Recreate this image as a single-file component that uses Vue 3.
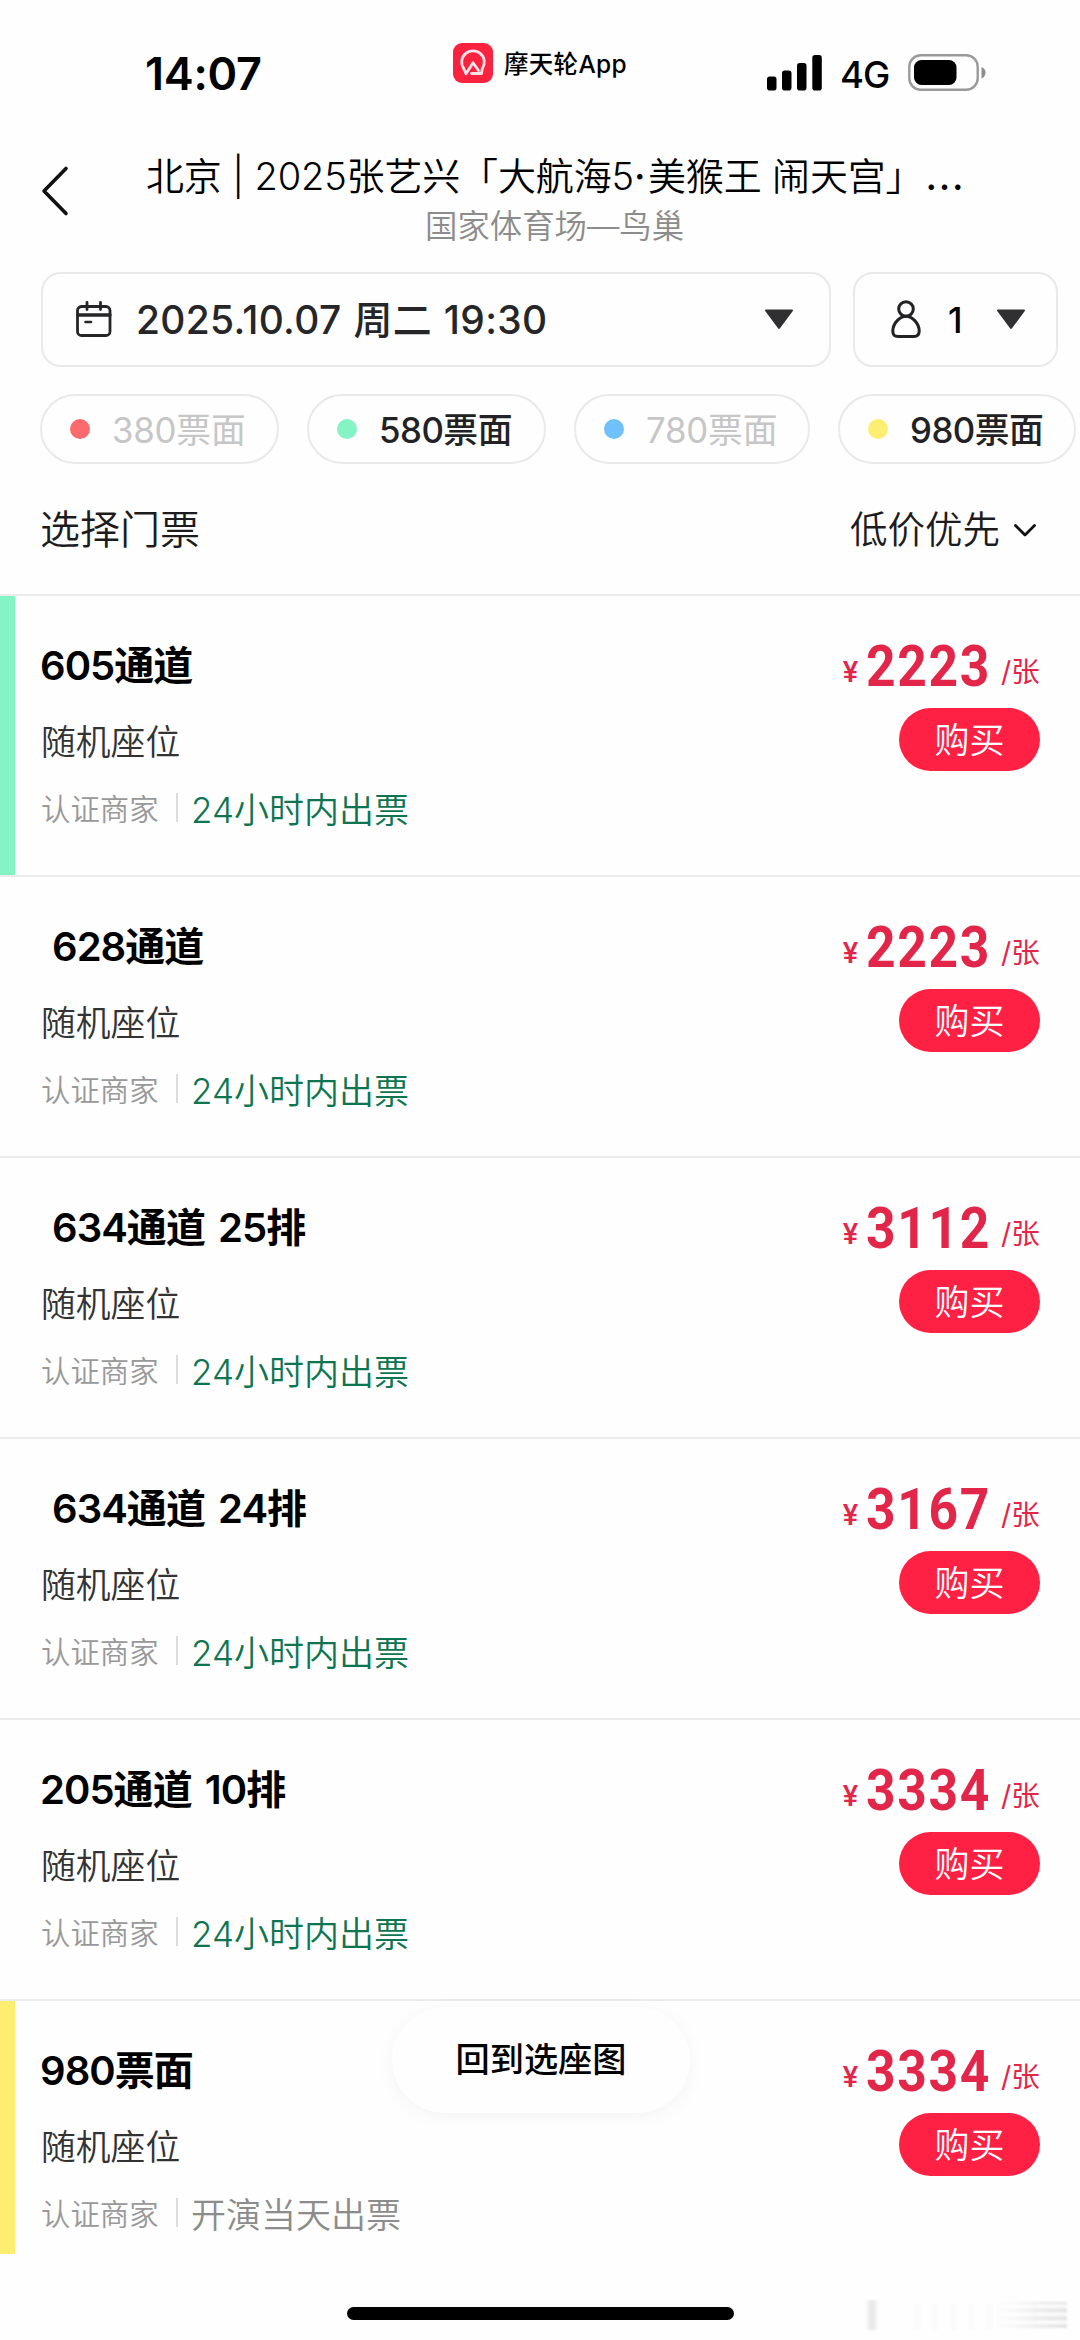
<script setup>
const faces = [
  { name: '380票面', color: '#fb6a6c', off: true, width: 239 },
  { name: '580票面', color: '#84f4c4', off: false, width: 239 },
  { name: '780票面', color: '#6fc0fb', off: true, width: 236 },
  { name: '980票面', color: '#fdee72', off: false, width: 238 },
]

const tickets = [
  { name: '605通道', price: 2223, issue: '24小时内出票', bar: '#84f4c4' },
  { name: '628通道', price: 2223, issue: '24小时内出票', indent: true },
  { name: '634通道 25排', price: 3112, issue: '24小时内出票', indent: true },
  { name: '634通道 24排', price: 3167, issue: '24小时内出票', indent: true },
  { name: '205通道 10排', price: 3334, issue: '24小时内出票' },
  { name: '980票面', price: 3334, issue: '开演当天出票', bar: '#fdee72', sameDay: true },
]
</script>

<template>
  <div class="screen">
    <div class="status">
      <div class="clock">14:07</div>
      <div class="source">
        <svg width="40" height="40" viewBox="0 0 40 40">
          <rect width="40" height="40" rx="9" fill="#f9223f" />
          <g fill="none" stroke="#ffe3e8" stroke-width="2.8" stroke-linejoin="round" stroke-linecap="round">
            <path d="M10.700 25.500A11.300 11.300 0 1 1 29.300 25.500L28.500 30.500H18.500" />
            <path d="M10.700 25.500L13 30.800L20 19.800L25.500 27.500" />
          </g>
        </svg>
        <span>摩天轮App</span>
      </div>
      <div class="signals">
        <svg class="bars" width="56" height="36" viewBox="0 0 56 36">
          <rect x="0" y="21.500" width="9.500" height="14" rx="2.800" />
          <rect x="15" y="15.500" width="9.500" height="20" rx="2.800" />
          <rect x="30" y="8" width="9.500" height="27.500" rx="2.800" />
          <rect x="45.300" y="0" width="9.500" height="35.500" rx="2.800" />
        </svg>
        <span class="net">4G</span>
        <svg width="78" height="38" viewBox="0 0 78 38">
          <rect x="1.300" y="1.300" width="68.400" height="34.400" rx="11.500" fill="none" stroke="#9a9a9a" stroke-width="2.400" />
          <rect x="6" y="6" width="42.500" height="25" rx="7.500" />
          <path d="M73.500 13Q77.500 14.500 77.500 18.500T73.500 24.500Z" fill="#8c8c8c" />
        </svg>
      </div>
    </div>

    <header class="head">
      <svg class="back" width="30" height="52" viewBox="0 0 30 52">
        <path d="M25 3.500L3 26L25 48.500" fill="none" stroke="#111" stroke-width="3.600" stroke-linecap="round" stroke-linejoin="round" />
      </svg>
      <div class="titles">
        <h1>北京 | 2025张艺兴「大航海5<span class="dot">·</span>美猴王 闹天宫」<span class="more">...</span></h1>
        <p>国家体育场—鸟巢</p>
      </div>
    </header>

    <div class="pickers">
      <div class="box date">
        <svg width="36" height="37" viewBox="0 0 36 37" fill="none" stroke="#262629" stroke-width="2.800" stroke-linecap="round">
          <rect x="1.500" y="5.500" width="32.500" height="29" rx="4" />
          <path d="M2 14H34" stroke-width="3.400" />
          <path d="M11 1.500V8.500M24.500 1.500V8.500" />
          <path d="M9.500 21H15" stroke-width="2.600" />
        </svg>
        <span class="when">2025.10.07 周二 19:30</span>
        <svg width="30" height="21" viewBox="0 0 30 21"><path d="M2 1.500H28L15 19Z" fill="#303033" stroke="#303033" stroke-width="2" stroke-linejoin="round" /></svg>
      </div>
      <div class="box count">
        <svg width="30" height="39" viewBox="0 0 30 39" fill="none" stroke="#222225" stroke-width="3">
          <circle cx="15" cy="9" r="7.300" />
          <path d="M15 16.300C21 16.300 28 23 28.200 31C28.200 35 26.500 36.500 23 36.500H7C3.500 36.500 1.800 35 1.800 31C2 23 9 16.300 15 16.300Z" />
        </svg>
        <span>1</span>
        <svg width="30" height="21" viewBox="0 0 30 21"><path d="M2 1.500H28L15 19Z" fill="#303033" stroke="#303033" stroke-width="2" stroke-linejoin="round" /></svg>
      </div>
    </div>

    <div class="faces">
      <div v-for="f in faces" :key="f.name" class="face" :class="{ off: f.off }" :style="{ width: f.width + 'px' }">
        <i :style="{ background: f.color }"></i>
        <span>{{ f.name }}</span>
      </div>
    </div>

    <div class="bar">
      <span class="choose">选择门票</span>
      <span class="sort">低价优先</span>
      <svg width="24" height="15" viewBox="0 0 24 15"><path d="M2.500 2.500L12 12L21.500 2.500" fill="none" stroke="#111" stroke-width="2.800" stroke-linecap="round" stroke-linejoin="round" /></svg>
    </div>

    <main class="list">
      <article v-for="(t, n) in tickets" :key="n" class="ticket">
        <div v-if="t.bar" class="stripe" :style="{ background: t.bar }"></div>
        <div class="info">
          <h2 :class="{ indent: t.indent }">{{ t.name }}</h2>
          <p class="seat">随机座位</p>
          <div class="meta">
            <span class="seller">认证商家</span>
            <i></i>
            <span class="issue" :class="{ late: t.sameDay }">{{ t.issue }}</span>
          </div>
        </div>
        <div class="buy">
          <div class="price">
            <span class="yen">¥</span><span class="num">{{ t.price }}</span><span class="per">/张</span>
          </div>
          <button>购买</button>
        </div>
      </article>
      <button class="seatmap">回到选座图</button>
    </main>

    <footer class="foot">
      <div class="home"></div>
      <div class="smudge"></div>
    </footer>
  </div>
</template>

<style>
body {
  margin: 0;
  background: #fefefe;
}
</style>

<style scoped>
.screen {
  width: 1080px;
  height: 2340px;
  overflow: hidden;
  position: relative;
  background: #fefefe;
  color: #000;
  font-family: Inter, "Noto Sans CJK SC", sans-serif;
  display: flex;
  flex-direction: column;
}
h1, h2, p { margin: 0; font-weight: 400; }
span, h1, h2, p, button { white-space: pre; }
svg { flex: none; display: block; }
button { border: 0; padding: 0; font-family: inherit; }

.status { height: 146px; display: flex; align-items: flex-start; flex: none; }
.clock {
  margin: 46px 0 0 145px;
  width: 308px;
  font-size: 45px;
  line-height: 56px;
  font-weight: 600;
  letter-spacing: -0.3px;
}
.source {
  margin-top: 43px;
  width: 314px;
  display: flex;
  gap: 11px;
  font-size: 24.5px;
  line-height: 42px;
  font-weight: 500;
  letter-spacing: 0.3px;
}
.signals { margin-top: 54px; display: flex; }
.bars { margin-top: 1px; }
.net {
  width: 68px;
  margin-left: 17px;
  font-size: 36.5px;
  line-height: 42px;
  font-weight: 500;
  letter-spacing: -1px;
}

.head { height: 126px; display: flex; flex: none; }
.back { margin: 19px 0 0 41px; }
.titles { margin-left: 75px; width: 816px; }
h1 { font-size: 38px; line-height: 56px; font-weight: 350; margin-top: 2px; letter-spacing: -0.15px; }
.dot { font-weight: 500; letter-spacing: 2.500px; }
.more { letter-spacing: 1.800px; margin-left: 2px; font-weight: 500; }
.titles p {
  font-size: 32.4px;
  line-height: 44px;
  margin: 1px 0 0 279px;
  color: #8c8c8c;
  font-weight: 350;
}

.pickers { display: flex; gap: 22px; padding-left: 41px; flex: none; }
.box {
  box-sizing: border-box;
  height: 95px;
  border: 2px solid #e9e9e9;
  border-radius: 20px;
  display: flex;
  align-items: center;
  color: #262629;
}
.date { width: 790px; padding-left: 33px; }
.when {
  width: 628px;
  margin-left: 24px;
  font-size: 38.900px;
  font-weight: 500;
  line-height: 50px;
  letter-spacing: 0.35px;
  word-spacing: 1.200px;
}
.count { width: 205px; padding-left: 36px; }
.count span { width: 48px; margin-left: 27px; font-size: 35px; font-weight: 550; color: #000; }

.faces { display: flex; gap: 28px; margin: 27px 0 0 40px; flex: none; }
.face {
  box-sizing: border-box;
  flex: none;
  height: 70px;
  border: 2px solid #e9e9e9;
  border-radius: 35px;
  display: flex;
  align-items: center;
  padding-left: 28px;
  font-size: 34.800px;
  line-height: 50px;
  font-weight: 500;
  color: #222225;
  letter-spacing: -0.5px;
}
.face i { width: 20px; height: 20px; border-radius: 50%; margin-right: 22px; }
.face span { padding-top: 2px; }
.face.off { color: #c6c6c6; font-weight: 400; letter-spacing: -0.2px; }

.bar { box-sizing: border-box; height: 130px; padding-top: 2px; display: flex; align-items: center; padding-left: 40px; flex: none; color: #1c1c1e; }
.bar span { font-weight: 350; line-height: 56px; }
.choose { width: 810px; font-size: 40px; }
.sort { width: 163px; font-size: 37.5px; }

.list { position: relative; height: 1660px; flex: none; }
.ticket {
  position: relative;
  box-sizing: border-box;
  height: 281.100px;
  border-top: 2px solid #ebebeb;
  display: flex;
  justify-content: space-between;
  padding: 0 40px 0 41px;
}
.stripe { position: absolute; left: 0; top: 0; width: 15px; height: 279px; }
.ticket:nth-child(6) { height: 255px; }
.ticket:nth-child(6) .stripe { height: 253px; }
h2 {
  margin: 42px 0 0 -1px;
  font-size: 40px;
  line-height: 56px;
  font-weight: 600;
  letter-spacing: -0.950px;
  word-spacing: 4px;
}
.indent { padding-left: 12px; }
.seat { margin-top: 23px; font-size: 34.800px; line-height: 50px; color: #333; font-weight: 350; }
.meta { margin-top: 15px; display: flex; align-items: center; height: 50px; }
.seller { width: 135px; font-size: 29.400px; color: #999; font-weight: 350; }
.meta i { width: 2px; height: 29px; background: #dcdcdc; margin-right: 13px; }
.issue { font-size: 35px; color: #0e7550; font-weight: 350; }
.issue.late { color: #8c8c8c; }

.buy { display: flex; flex-direction: column; align-items: flex-end; }
.price { margin-top: 40px; height: 60px; line-height: 60px; display: flex; align-items: baseline; color: #e2264a; }
.yen {
  font-family: Roboto, sans-serif;
  font-size: 29px;
  font-weight: 500;
  width: 23px;
  transform: translateY(-4px);
}
/* condensed numerals: glyphs are narrowed, tracking keeps a 31px advance */
.num {
  font-family: Roboto, sans-serif;
  font-weight: 700;
  font-size: 58px;
  letter-spacing: 1.800px;
  transform: scaleX(0.89);
  transform-origin: left;
  margin-right: -15px;
}
.per { width: 41px; margin-left: 8px; font-size: 28.500px; transform: translate(2px, -4px); }
.buy button {
  margin-top: 12px;
  width: 141px;
  height: 63px;
  border-radius: 32px;
  background: #ff2144;
  color: #fff;
  font-size: 35px;
  line-height: 60px;
  font-weight: 350;
}

.seatmap {
  position: absolute;
  left: 392px;
  top: 1413px;
  width: 298px;
  height: 106px;
  border-radius: 53px;
  background: #fefefe;
  box-shadow: 0 4px 18px rgba(0, 0, 0, 0.045);
  font-size: 34.200px;
  font-weight: 500;
  line-height: 104px;
  color: #000;
}

.foot { flex: 1; display: flex; align-items: flex-start; }
.home { margin: 53px 0 0 347px; width: 387px; height: 13px; border-radius: 7px; background: #000; }
.smudge {
  margin: 46px 0 0 131px;
  width: 205px;
  height: 30px;
  filter: blur(1px);
  background:
    linear-gradient(90deg, #fefefe, rgba(254, 254, 254, 0)) 130px 0 / 72px 30px no-repeat,
    repeating-linear-gradient(180deg, rgba(0, 0, 0, 0.14) 0, transparent 4px 5px, rgba(0, 0, 0, 0.14) 8px) 130px 2px / 72px 26px no-repeat,
    linear-gradient(90deg, transparent, rgba(0, 0, 0, 0.1) 50%, transparent) 0 0 / 14px 30px no-repeat,
    repeating-linear-gradient(90deg, transparent 0 7px, rgba(0, 0, 0, 0.015) 12px, transparent 18px) 40px 4px / 90px 26px no-repeat;
}
</style>
